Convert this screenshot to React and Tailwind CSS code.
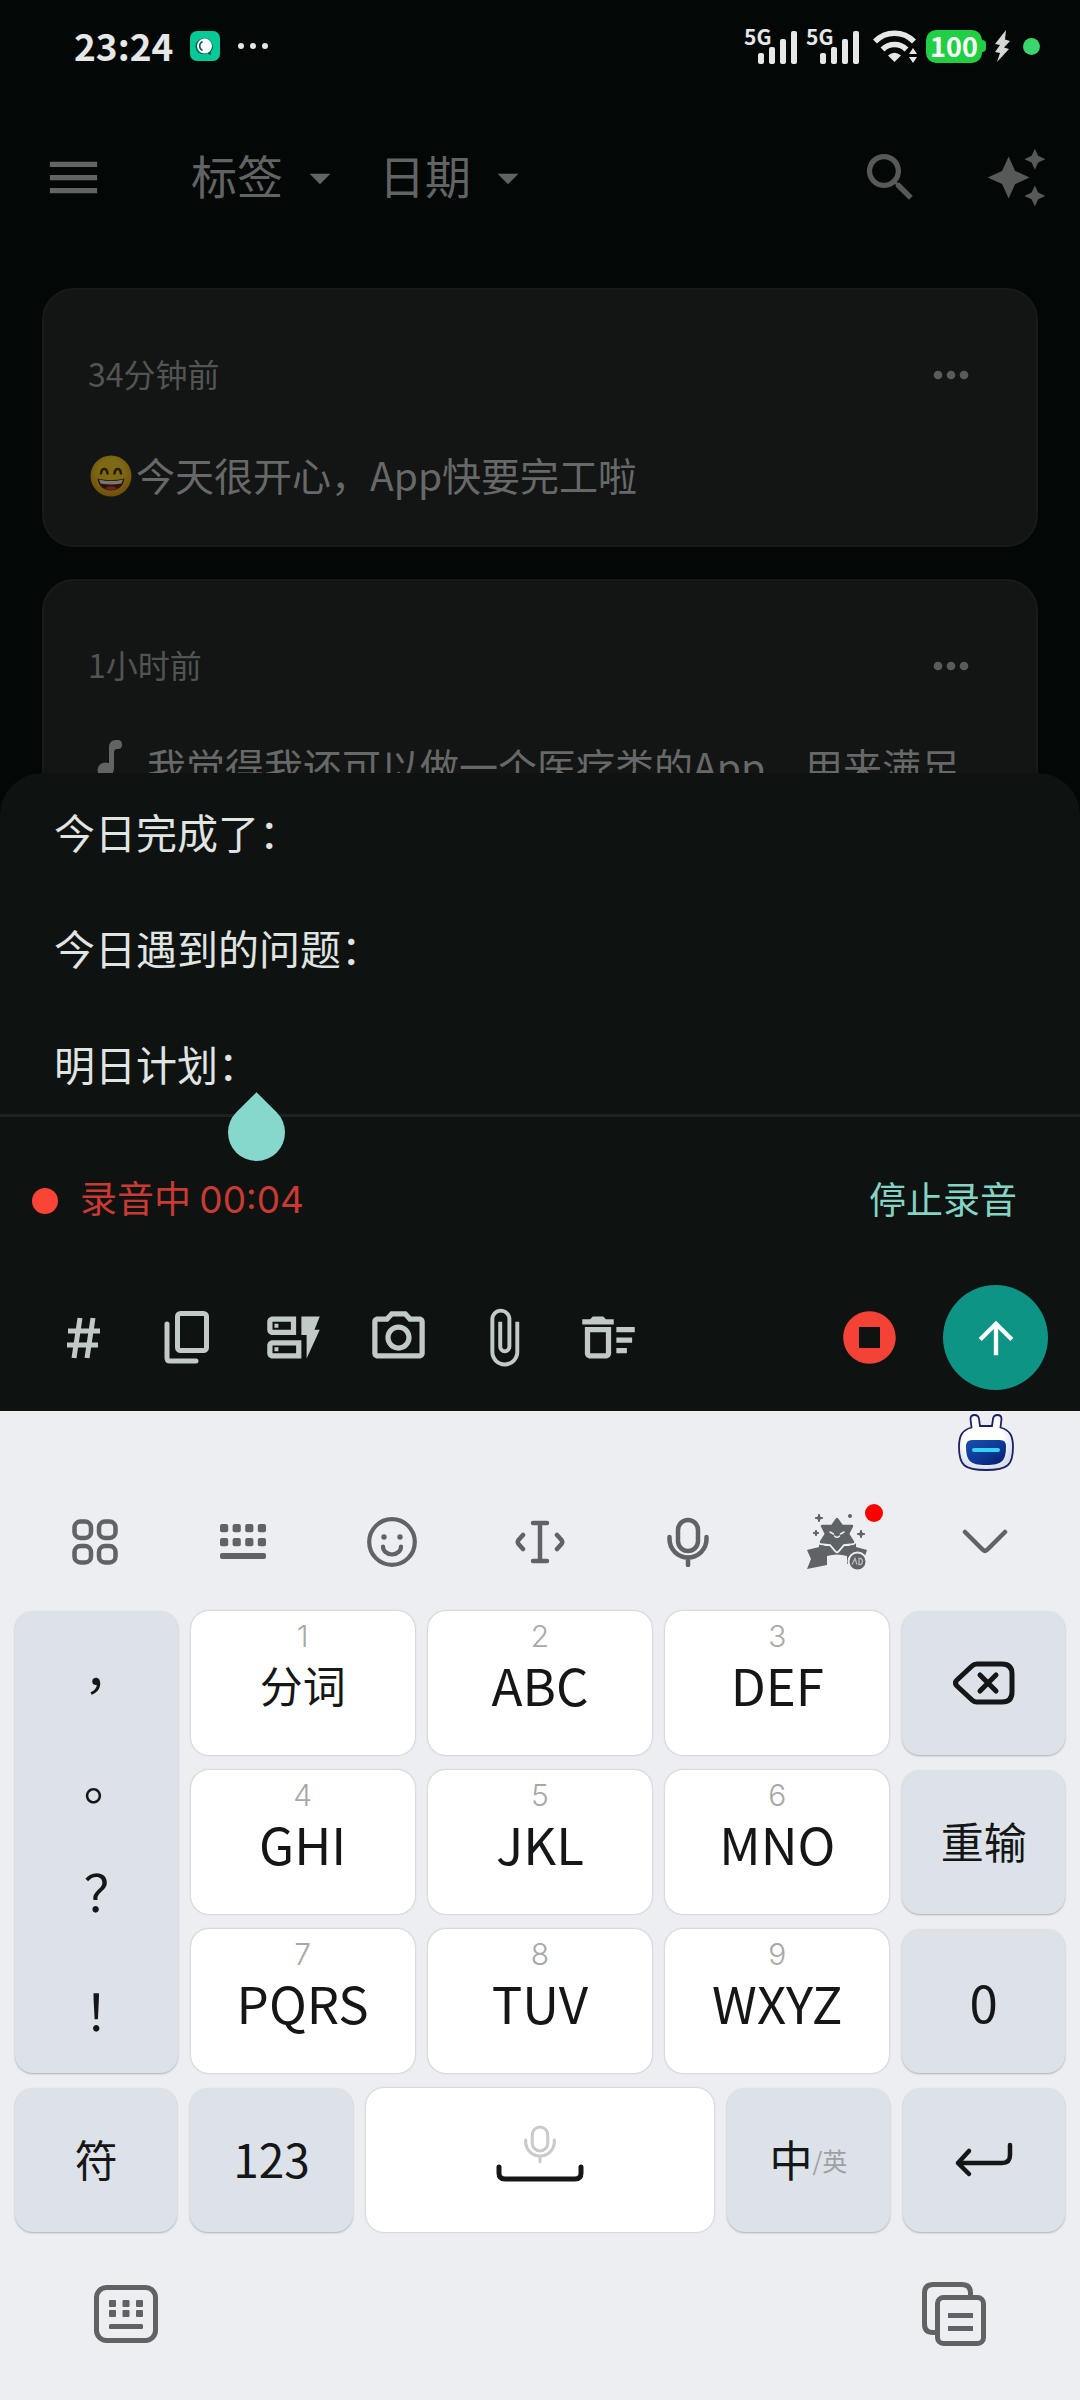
import {
  MdArrowDropDown,
  MdArrowUpward,
  MdAttachFile,
  MdAutoAwesome,
  MdMenu,
  MdMoreHoriz,
  MdOutlineCameraAlt,
  MdOutlineDeleteSweep,
  MdOutlineDynamicForm,
  MdSearch,
  MdStopCircle,
} from "react-icons/md";

const draft = "今日完成了：\n\n今日遇到的问题：\n\n明日计划：";

const letterKeys = [
  { digit: "1", label: "分词", cjk: true },
  { digit: "2", label: "ABC" },
  { digit: "3", label: "DEF" },
  { digit: "4", label: "GHI" },
  { digit: "5", label: "JKL" },
  { digit: "6", label: "MNO" },
  { digit: "7", label: "PQRS" },
  { digit: "8", label: "TUV" },
  { digit: "9", label: "WXYZ" },
];

// --- Status bar ---
const Signal = () => (
  <div className="relative h-9 w-[54px]">
    <span className="absolute left-0 top-0 text-[21px] leading-4 font-bold">5G</span>
    <svg className="absolute right-0 bottom-0" width="41" height="34" viewBox="0 0 41 34" fill="currentColor">
      <rect x="1" y="23" width="6" height="11" rx="2" />
      <rect x="12" y="17" width="6" height="17" rx="2" />
      <rect x="23" y="9" width="6" height="25" rx="2" />
      <rect x="34" y="1" width="6" height="33" rx="2" />
    </svg>
  </div>
);

const StatusBar = () => (
  <div className="flex h-[92px] shrink-0 items-center pl-[74px] pr-10 text-[#e6e8e7]">
    <span className="pb-0.5 text-[37px] leading-none font-bold">23:24</span>
    <svg className="ml-[17px]" width="30" height="30" viewBox="0 0 30 30">
      <rect width="30" height="30" rx="7" fill="#06c997" />
      <path d="M15 7.5a8 8 0 0 1 6 13l-.5 4-3-2.200A8 8 0 1 1 15 7.500z" fill="#075c49" />
      <circle cx="14.500" cy="15" r="7.500" fill="#fff" />
      <path d="M12.500 10.500a5 5 0 0 0 0 9" fill="none" stroke="#075c49" strokeWidth="1.500" />
    </svg>
    <div className="ml-[18px] flex gap-1.5">
      <i className="size-1.5 rounded-full bg-[#e6e8e7]"></i>
      <i className="size-1.5 rounded-full bg-[#e6e8e7]"></i>
      <i className="size-1.5 rounded-full bg-[#e6e8e7]"></i>
    </div>
    <div className="ml-auto flex items-center">
      <Signal />
      <div className="ml-2"><Signal /></div>
      <svg className="ml-3" width="46" height="34" viewBox="0 0 46 34" fill="none" stroke="currentColor" strokeWidth="5.500">
        <path d="M3 12.500A27 27 0 0 1 42 12.500" />
        <path d="M10.500 20.500A17 17 0 0 1 34.500 20.500" />
        <path d="M16 26.500Q22.500 21 29 26.500L22.500 33z" fill="currentColor" stroke="none" />
        <path d="M37 25l4-6 4 6zM37 28h8l-4 6z" fill="currentColor" stroke="none" />
      </svg>
      <div className="ml-2 flex items-center">
        <span className="flex h-[33px] w-14 items-center justify-center rounded-[10px] bg-[#21cf43] pb-0.5 text-[27px] leading-none font-bold text-white">
          100
        </span>
        <i className="h-3 w-1 rounded-r-sm bg-[#21cf43]"></i>
      </div>
      <svg className="ml-2" width="17" height="32" viewBox="0 0 17 32" fill="#d5d7d6">
        <path d="M12 0L1 14l5 1-5 7 5 1L3 32 15 19l-5-1.500L16 11l-5-1.500z" />
      </svg>
      <i className="ml-3 size-[17px] rounded-full bg-[#3bd56d]"></i>
    </div>
  </div>
);

// --- Notes list ---
const Filter = ({ label }) => (
  <label className="flex items-center gap-3">
    <select aria-label={label} className="appearance-none bg-transparent pb-2 text-[46px] leading-[60px] outline-none">
      <option>{label}</option>
    </select>
    <MdArrowDropDown size={50} />
  </label>
);

const Header = () => (
  <header className="flex h-[171px] shrink-0 items-center pl-[42px] pr-8 text-[#626464]">
    <button aria-label="菜单"><MdMenu size={63} /></button>
    <div className="ml-[86px] flex gap-[34px]">
      <Filter label="标签" />
      <Filter label="日期" />
    </div>
    <div className="ml-auto flex gap-[63px] text-[#575959]">
      <button aria-label="搜索"><MdSearch size={63} /></button>
      <button aria-label="AI"><MdAutoAwesome size={63} /></button>
    </div>
  </header>
);

const GrinIcon = () => (
  <svg className="ml-0.5 mr-1 shrink-0" width="42" height="42" viewBox="0 0 42 42">
    <defs>
      <radialGradient id="grin" cx="50%" cy="40%" r="60%">
        <stop offset="0.500" stopColor="#7d6a14" />
        <stop offset="1" stopColor="#6f4e0a" />
      </radialGradient>
    </defs>
    <circle cx="21" cy="21" r="20.500" fill="url(#grin)" />
    <path d="M11 18.500c.5-6 6-6 6.500 0M24.500 18.500c.5-6 6-6 6.500 0" fill="none" stroke="#2c1a06" strokeWidth="2.500" strokeLinecap="round" />
    <path d="M7.500 23.500q13.500 3.500 27 0c-1 8-6.500 12-13.500 12s-12.500-4-13.500-12z" fill="#2c1208" />
    <path d="M9 24.500q12 3 24 0l-1.500 4q-10.500 2-21 0z" fill="#777" />
    <path d="M14.500 33.500q6.500-5 13 0-6.500 3.500-13 0z" fill="#6a241c" />
  </svg>
);

const NoteIcon = () => (
  <svg className="mr-[13px] shrink-0" width="46" height="56" viewBox="0 0 46 56" fill="#626463">
    <ellipse cx="17.500" cy="31" rx="8" ry="7.500" />
    <path d="M21 31V9q0-8 7-8h2q4 0 4 4.500T30 10h-1q-3 0-3 4v17z" />
  </svg>
);

const NoteCard = ({ time, icon, text }) => (
  <article className="rounded-[32px] border-2 border-[#181a19] bg-[#131514] px-11 pb-10 pt-[59px]">
    <div className="flex h-[52px] items-center justify-between pr-[15px]">
      <time className="pb-1 text-[32px] leading-[48px] text-[#525453]">{time}</time>
      <button aria-label="更多" className="text-[#595b5a]"><MdMoreHoriz size={52} /></button>
    </div>
    <div className="mt-[46px] flex h-[58px] items-center">
      {icon}
      <p className="pb-1 text-[39px] leading-[54px] whitespace-nowrap text-[#676968]">{text}</p>
    </div>
  </article>
);

// --- Editor sheet ---
const ToolButton = ({ label, children }) => (
  <button aria-label={label} className="flex size-[105px] items-center justify-center">
    {children}
  </button>
);

const Editor = () => (
  <section className="shrink-0 rounded-t-[42px] bg-[#0e1312] pt-[29px]">
    <div className="relative">
      <textarea
        aria-label="笔记内容"
        rows={5}
        spellCheck={false}
        defaultValue={draft}
        className="block w-full resize-none overflow-hidden bg-transparent px-[54px] text-[41px] leading-[58px] text-[#e0e4e2] outline-none"
      />
      {/* text selection handle */}
      <i className="absolute left-[228px] top-[302px] size-[57px] rotate-45 rounded-full rounded-tl-none bg-[#85d8cb]"></i>
    </div>
    <div className="mt-[22px] flex h-[171px] items-center border-t-[3px] border-[#1a2321] pl-8 pr-[63px] text-[37px]">
      <i className="size-[26px] rounded-full bg-[#f94436]"></i>
      <span className="ml-[22px] pb-1 text-[#c93a34]">
        录音中 <span className="font-['Inter',sans-serif]">00:04</span>
      </span>
      <button className="ml-auto pb-1 text-[#84d3c4]">停止录音</button>
    </div>
    <div className="flex items-center pb-[21px] pl-[31px] pr-8 text-[#c1cac7]">
      <ToolButton label="标签">
        <svg width="36" height="42" viewBox="0 0 36 42" fill="none" stroke="currentColor" strokeWidth="5">
          <path d="M14 1L8 41M27 1l-6 40M2 14h32M1 28h31" />
        </svg>
      </ToolButton>
      <ToolButton label="模板">
        <svg width="54" height="60" viewBox="0 0 54 60" fill="none" stroke="currentColor" strokeWidth="5" strokeLinecap="round">
          <rect x="15.500" y="5.500" width="29" height="37" rx="3" />
          <path d="M5 16v34q0 3 3 3h26" />
        </svg>
      </ToolButton>
      <ToolButton label="表单"><MdOutlineDynamicForm size={63} /></ToolButton>
      <ToolButton label="拍照"><MdOutlineCameraAlt size={63} /></ToolButton>
      <ToolButton label="附件"><MdAttachFile size={63} /></ToolButton>
      <ToolButton label="清空"><MdOutlineDeleteSweep size={63} /></ToolButton>
      <button aria-label="停止" className="ml-auto mr-[42px] text-[#f44336]"><MdStopCircle size={63} /></button>
      <button aria-label="发送" className="flex size-[105px] items-center justify-center rounded-full bg-[#0e9485] text-white">
        <MdArrowUpward size={52} />
      </button>
    </div>
  </section>
);

// --- Keyboard ---
const RobotIcon = () => (
  <svg width="60" height="60" viewBox="0 0 60 60">
    <defs>
      <linearGradient id="face" x1="0" y1="0" x2="1" y2="1">
        <stop offset="0" stopColor="#1c4fae" />
        <stop offset="0.500" stopColor="#0d3a9a" />
        <stop offset="1" stopColor="#061d63" />
      </linearGradient>
      <radialGradient id="head" cx="45%" cy="40%" r="60%">
        <stop offset="0.600" stopColor="#fff" />
        <stop offset="1" stopColor="#d9deee" />
      </radialGradient>
    </defs>
    <path
      d="M15.500 14.500L14.500 6q0-4 4-4t4.500 4l1 7h12l1-7q.5-4 4.500-4t4 4l-1 8.500C54 17 57 23 57 34c0 18-5 23-27 23S3 52 3 34c0-11 3-17 12.500-19.500z"
      fill="url(#head)"
      stroke="#1b2160"
      strokeWidth="1.800"
    />
    <path d="M16 27h28q6 0 6 6c0 15-4 19-20 19s-20-4-20-19q0-6 6-6z" fill="url(#face)" />
    <rect x="16" y="35" width="28" height="4" rx="2" fill="#35d3f2" />
  </svg>
);

const StarIcon = () => {
  const star = "M30 7l5 7 10 0-4 8 5 8-10 1-6 7-6-7-10-1 5-8-4-8 10 0z";
  return (
    <svg width="60" height="60" viewBox="0 0 60 60" fill="currentColor">
      <path d="M12 35v-6l6 5 24 0 7-5v6l11 3-3 9-17 5v-8q-10-3-20 0v9L0 57l4-10-4-9z" />
      <path d={star} stroke="#edeef1" strokeWidth="6" strokeLinejoin="round" />
      <path d={star} stroke="currentColor" strokeWidth="2.500" strokeLinejoin="round" />
      <path d="M23 20l3.500 2M37 20l-3.500 2M27.500 24q2.500 2.500 5 0" fill="none" stroke="#edeef1" strokeWidth="1.500" strokeLinecap="round" />
      <path d="M12 2l1 3 3 1-3 1-1 3-1-3-3-1 3-1zM54 18l1 3 3 1-3 1-1 3-1-3-3-1 3-1zM9 18l.8 2.200 2.200.8-2.200.8L9 24l-.8-2.200L6 21l2.200-.8z" stroke="currentColor" />
      <circle cx="43" cy="4" r="2" />
      <circle cx="50.500" cy="49.500" r="9" stroke="#edeef1" strokeWidth="2" />
      <path d="M45 52.500l3-6 2 6M52 46.500h2q3 3 0 6h-2z" fill="none" stroke="#b9bbbd" strokeWidth="1.300" />
    </svg>
  );
};

const MicIcon = ({ className, width, height, stroke }) => (
  <svg className={className} width={width} height={height} viewBox="0 0 44 50" fill="none" stroke="currentColor" strokeWidth={stroke} strokeLinecap="round">
    <rect x="12" y="3" width="20" height="31" rx="10" />
    <path d="M3.500 20v2a18.500 18.500 0 0 0 37 0v-2M22 41v7" />
  </svg>
);

const BarButton = ({ label, children }) => (
  <button aria-label={label} className="flex h-full flex-1 items-center justify-center">
    {children}
  </button>
);

const KeyboardBar = () => (
  <div className="flex h-[138px] items-center px-[21px] text-[#5f6266]">
    <BarButton label="功能">
      <svg width="48" height="48" viewBox="0 0 48 48" fill="none" stroke="currentColor" strokeWidth="4.500">
        <rect x="3.500" y="3.500" width="16.500" height="16.500" rx="6" />
        <rect x="28" y="3.500" width="16.500" height="16.500" rx="6" />
        <rect x="3.500" y="28" width="16.500" height="16.500" rx="6" />
        <rect x="28" y="28" width="16.500" height="16.500" rx="6" />
      </svg>
    </BarButton>
    <BarButton label="键盘">
      <svg width="46" height="36" viewBox="0 0 46 36" fill="currentColor">
        {[0, 12.6, 25.2, 37.8].map((x) => (
          <g key={x}>
            <rect x={x} y="0" width="8.200" height="8.200" rx="2" />
            <rect x={x} y="14" width="8.200" height="8.200" rx="2" />
          </g>
        ))}
        <rect x="0" y="29" width="46" height="6" rx="2" />
      </svg>
    </BarButton>
    <BarButton label="表情">
      <svg width="50" height="50" viewBox="0 0 50 50" fill="none" stroke="currentColor" strokeWidth="4.200" strokeLinecap="round">
        <circle cx="25" cy="25" r="22.800" />
        <path d="M16 29.500a9 8 0 0 0 18 0" />
        <circle cx="17" cy="20" r="2.700" fill="currentColor" stroke="none" />
        <circle cx="33" cy="20" r="2.700" fill="currentColor" stroke="none" />
      </svg>
    </BarButton>
    <BarButton label="光标">
      <svg width="50" height="44" viewBox="0 0 50 44" fill="none" stroke="currentColor" strokeWidth="4.500" strokeLinecap="round" strokeLinejoin="round">
        <path d="M18 3h14M18 41h14M25 3v38M8 15l-4.500 5q-1.500 2 0 4L8 29M42 15l4.500 5q1.500 2 0 4L42 29" />
      </svg>
    </BarButton>
    <BarButton label="语音"><MicIcon width={44} height={50} stroke={4.5} /></BarButton>
    <BarButton label="活动">
      <span className="relative">
        <StarIcon />
        <i className="absolute -right-4 -top-2 size-[18px] rounded-full bg-[#fe0000]"></i>
      </span>
    </BarButton>
    <BarButton label="收起">
      <svg width="46" height="26" viewBox="0 0 46 26" fill="none" stroke="currentColor" strokeWidth="4.500" strokeLinecap="round" strokeLinejoin="round">
        <path d="M3 3l17.500 17.500q2.500 2.500 5 0L43 3" />
      </svg>
    </BarButton>
  </div>
);

const sideKey =
  "flex h-36 items-center justify-center rounded-[18px] bg-[#dde2e9] shadow-[0_1px_2px_rgba(90,100,115,0.45)]";
const lightKey = "flex h-36 flex-col items-center rounded-[18px] bg-white shadow-[0_0_2px_rgba(90,95,100,0.5)]";

const LetterKey = ({ digit, label, cjk }) => (
  <button className={lightKey}>
    <span className="mt-1 font-['Inter',sans-serif] text-[30px] leading-[42px] font-light text-[#a8a8a8]">{digit}</span>
    <span className={cjk ? "text-[43px] leading-[54px]" : "text-[51px] leading-[54px]"}>{label}</span>
  </button>
);

const Keyboard = () => (
  <section className="shrink-0 bg-[#edeef1] text-[#141617]">
    <div className="flex h-[62px] items-end justify-end pr-16">
      <button aria-label="助手"><RobotIcon /></button>
    </div>
    <KeyboardBar />
    <div className="grid grid-cols-[163fr_701fr_163fr] gap-x-[13px] px-[15px]">
      <div className="flex flex-col rounded-[18px] bg-[#dde2e9] text-[50px] shadow-[0_1px_2px_rgba(90,100,115,0.45)]">
        <button className="flex-1 leading-none [font-feature-settings:'halt']">，</button>
        <button className="flex-1 leading-none [font-feature-settings:'halt']">。</button>
        <button className="flex-1 pb-2 leading-none [font-feature-settings:'halt']">？</button>
        <button className="flex-1 pb-2 leading-none [font-feature-settings:'halt']">！</button>
      </div>
      <div className="grid grid-cols-3 gap-x-[13px] gap-y-[15px]">
        {letterKeys.map((k) => (
          <LetterKey key={k.digit} {...k} />
        ))}
      </div>
      <div className="flex flex-col gap-[15px]">
        <button aria-label="删除" className={sideKey}>
          <svg width="62" height="44" viewBox="0 0 62 44" fill="none" stroke="currentColor" strokeWidth="5" strokeLinecap="round" strokeLinejoin="round">
            <path d="M24 3h25q10 0 10 10v18q0 10-10 10H24q-3 0-5-2L4 25q-3-3 0-6L19 5q2-2 5-2z" />
            <path d="M27 14l16 16M43 14L27 30" />
          </svg>
        </button>
        <button className={sideKey + " pb-1 text-[43px]"}>重输</button>
        <button className={sideKey + " text-[51px]"}>0</button>
      </div>
    </div>
    <div className="mt-[15px] grid grid-cols-[163fr_163fr_350fr_163fr_163fr] gap-x-[13px] px-[15px]">
      <button className={sideKey + " pb-1 text-[43px]"}>符</button>
      <button className={sideKey + " pb-1 text-[46px]"}>123</button>
      <button aria-label="空格" className={lightKey}>
        <MicIcon className="mt-9 text-[#c9cbcb]" width={34} height={40} stroke={4} />
        <svg width="88" height="20" viewBox="0 0 88 20" fill="none" stroke="currentColor" strokeWidth="5" strokeLinecap="round">
          <path d="M3 3v6q0 6 6 6h70q6 0 6-6V3" />
        </svg>
      </button>
      <button className={sideKey + " pb-1"}>
        <span className="text-[43px] leading-[60px]">中</span>
        <span className="pt-1 text-[25px] leading-[60px] text-[#9da1a6]">/英</span>
      </button>
      <button aria-label="换行" className={sideKey}>
        <svg width="60" height="36" viewBox="0 0 60 36" fill="none" stroke="currentColor" strokeWidth="4.500" strokeLinecap="round" strokeLinejoin="round">
          <path d="M56 3v10q0 8-8 8H4M15 9L4 21l11 11" />
        </svg>
      </button>
    </div>
    <div className="flex h-[168px] items-center justify-between px-[93px] pb-1 text-[#606264]">
      <button aria-label="切换键盘">
        <svg width="66" height="60" viewBox="0 0 66 60" fill="none" stroke="currentColor" strokeWidth="5">
          <rect x="3.500" y="3.500" width="59" height="53" rx="10" />
          <g fill="currentColor" stroke="none">
            {[16, 29.5, 43].map((x) => (
              <g key={x}>
                <rect x={x} y="16" width="7" height="7" rx="1" />
                <rect x={x} y="26" width="7" height="7" rx="1" />
              </g>
            ))}
            <rect x="16" y="40" width="34" height="5" rx="1.500" />
          </g>
        </svg>
      </button>
      <button aria-label="剪贴板">
        <svg width="66" height="66" viewBox="0 0 66 66" fill="none" stroke="currentColor" strokeWidth="5">
          <path d="M49.500 16v-4q0-8.500-8.500-8.500H12q-8.500 0-8.500 8.500v31q0 8.500 8.500 8.500h4" />
          <rect x="16.500" y="16.500" width="46" height="46" rx="6" />
          <path d="M27 34.500h25M27 47.500h25" />
        </svg>
      </button>
    </div>
  </section>
);

export default function App() {
  return (
    <div className="flex h-screen flex-col overflow-hidden bg-[#030706] font-['Noto_Sans_CJK_SC',sans-serif]" lang="zh-CN">
      <main className="flex min-h-0 flex-1 flex-col overflow-hidden">
        <StatusBar />
        <Header />
        <div className="flex flex-col gap-8 px-[42px] pt-[25px]">
          <NoteCard time="34分钟前" icon={<GrinIcon />} text="今天很开心，App快要完工啦" />
          <NoteCard time="1小时前" icon={<NoteIcon />} text="我觉得我还可以做一个医疗类的App，用来满足" />
        </div>
      </main>
      <Editor />
      <Keyboard />
    </div>
  );
}
